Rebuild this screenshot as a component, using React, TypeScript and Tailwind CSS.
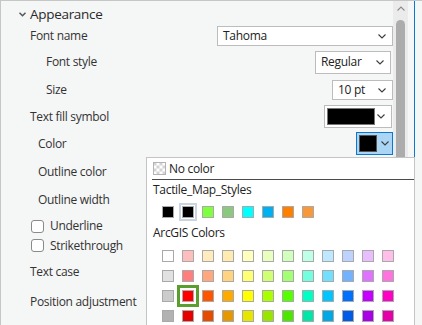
import React from 'react';

const tactile = ['#000000', '#000000', '#80ff40', '#8cc880', '#00ffff', '#00b0f0', '#ff8000', '#f7993b'];

const arcgis = [
  ['#ffffff', '#ffbebe', '#ffebbe', '#ffebaf', '#ffffbe', '#e9ffbe', '#d3ffbe', '#beffe8', '#bee8ff', '#bed2ff', '#e8beff', '#ffbee8'],
  ['#e1e1e1', '#ff7f7f', '#ffa77f', '#ffd37f', '#ffff73', '#d1ff73', '#a3ff73', '#73ffdf', '#73dfff', '#73b2ff', '#df73ff', '#ff73df'],
  ['#cccccc', '#ff0000', '#ff5500', '#ffaa00', '#ffff00', '#aaff00', '#55ff00', '#00ffc5', '#00c5ff', '#0070ff', '#c500ff', '#ff00c5'],
  ['#b2b2b2', '#e60000', '#e64c00', '#e69800', '#e6e600', '#98e600', '#4ce600', '#00e6a9', '#00a9e6', '#005ce6', '#a900e6', '#e600a9'],
];

const Chevron = () => (
  <svg width="8" height="5" viewBox="0 0 8 5" className="shrink-0">
    <polyline points="0.5,0.5 4,4 7.5,0.5" fill="none" stroke="#3c3c3c" strokeWidth="1.1" />
  </svg>
);

const Checker = () => (
  <svg width="13" height="13" viewBox="0 0 13 13" className="shrink-0">
    <rect x="0" y="0" width="13" height="13" fill="#ffffff" />
    {[0, 1, 2, 3].map(r =>
      [0, 1, 2, 3].map(c =>
        (r + c) % 2 === 0 ? (
          <rect key={`${r}-${c}`} x={0.5 + c * 3} y={0.5 + r * 3} width="3" height="3" fill="#d4d4d4" />
        ) : null
      )
    )}
    <rect x="0.5" y="0.5" width="12" height="12" fill="none" stroke="#b4b4b4" />
  </svg>
);

const Swatch = ({ color, className = '' }: { color: string; className?: string }) => (
  <div
    className={`w-[12px] h-[12px] border border-[#a9a9a9] shrink-0 ${className}`}
    style={{ backgroundColor: color }}
  />
);

const Checkbox = () => (
  <div className="w-[13px] h-[13px] rounded-[3px] border border-[#8a8a8a] bg-white shrink-0" />
);

export default function App() {
  return (
    <div className="w-[422px] h-[325px] overflow-hidden relative bg-[#f5f6f6] border-t border-l border-[#c6c6c6] text-[12px] tracking-[-0.3px] text-[#333333] font-['Open_Sans','Noto_Sans',sans-serif]">
      <div className="flex h-full">
        <div className="w-[392px] pt-[3px] flex flex-col">
          <div className="h-[20px] flex items-center pl-[18px] gap-[4px]">
            <svg width="7" height="5" viewBox="0 0 7 5" className="shrink-0">
              <polyline points="0.5,0.8 3.5,3.8 6.5,0.8" fill="none" stroke="#555" strokeWidth="1.5" />
            </svg>
            <span className="text-[13.5px] text-[#2a2a2a]">Appearance</span>
          </div>

          <div className="h-[24px] flex items-center justify-between pl-[29px]">
            <span>Font name</span>
            <div className="w-[176px] h-[20px] bg-white border border-[#bcbcbc] flex items-center justify-between pl-[5px] pr-[6px]">
              <span className="text-[#222]">Tahoma</span>
              <Chevron />
            </div>
          </div>

          <div className="h-[28px] flex items-center justify-between pl-[45px]">
            <span>Font style</span>
            <div className="w-[76px] h-[23px] mr-[2px] bg-white border border-[#bcbcbc] flex items-center justify-between pl-[5px] pr-[6px]">
              <span className="text-[#222]">Regular</span>
              <Chevron />
            </div>
          </div>

          <div className="h-[28px] flex items-center justify-between pl-[45px]">
            <span>Size</span>
            <div className="w-[61px] h-[20px] bg-white border border-[#bcbcbc] flex items-center justify-between pl-[5px] pr-[6px]">
              <span className="text-[#222]">10 pt</span>
              <Chevron />
            </div>
          </div>

          <div className="h-[25px] flex items-center justify-between pl-[29px]">
            <span>Text fill symbol</span>
            <div className="w-[68px] h-[23px] mr-[1px] bg-white border border-[#bcbcbc] flex items-center justify-between pl-[2px] pr-[6px]">
              <div className="w-[48px] h-[17px] bg-black border border-[#777]" />
              <Chevron />
            </div>
          </div>

          <div className="h-[29px] flex items-center justify-between pl-[37px]">
            <span>Color</span>
            <div className="w-[37px] h-[23px] bg-[#aad5f4] border border-[#0a78d2] flex items-center justify-between pl-[2px] pr-[3px]">
              <div className="w-[18px] h-[17px] bg-black border border-[#555]" />
              <Chevron />
            </div>
          </div>

          <div className="h-[28px] flex items-center pl-[37px]">
            <span>Outline color</span>
          </div>

          <div className="h-[28px] flex items-center pl-[37px]">
            <span>Outline width</span>
          </div>

          <div className="h-[24px] flex items-center pl-[30px] gap-[6px]">
            <Checkbox />
            <span>Underline</span>
          </div>

          <div className="h-[15px] flex items-center pl-[30px] gap-[6px]">
            <Checkbox />
            <span>Strikethrough</span>
          </div>

          <div className="h-[38px] flex items-center pl-[29px]">
            <span>Text case</span>
          </div>

          <div className="h-[22px] flex items-center pl-[29px]">
            <span>Position adjustment</span>
          </div>
        </div>

        <div className="w-[15px] bg-[#ebebeb] flex flex-col items-center">
          <svg width="8" height="5" viewBox="0 0 8 5" className="mt-[5px]">
            <polyline points="0.5,4.5 4,1 7.5,4.5" fill="none" stroke="#8a8a8a" strokeWidth="1.1" />
          </svg>
          <div className="w-[9px] flex-1 mt-[9px] rounded-t-full bg-[#acacac]" />
        </div>
        <div className="w-[6px]" />
        <div className="w-px bg-[#0a78d2]" />
        <div className="flex-1" />
      </div>

      <div className="absolute left-[145px] top-[156px] w-[269px] h-[180px] bg-white border border-[#c4c4c4] flex flex-col">
        <div className="h-[21px] flex items-center pl-[6px] gap-[3px]">
          <Checker />
          <span className="text-[#222]">No color</span>
        </div>
        <div className="h-px ml-[5px] bg-[#4a4a4a]" />
        <div className="h-[20px] flex items-center pl-[6px]">
          <span className="text-[#222]">Tactile_Map_Styles</span>
        </div>
        <div className="mt-[6px] flex pl-[15px] gap-[8px]">
          {tactile.map((c, i) => (
            <Swatch
              key={i}
              color={c}
              className={i === 1 ? 'outline-2 outline-solid outline-[#c8d6e3] outline-offset-[1px]' : ''}
            />
          ))}
        </div>
        <div className="mt-[6px] h-[18px] flex items-center pl-[6px]">
          <span className="text-[#222]">ArcGIS Colors</span>
        </div>
        <div className="mt-[8px] flex flex-col gap-[8px] pl-[15px]">
          {arcgis.map((row, r) => (
            <div key={r} className="flex gap-[8px]">
              {row.map((c, i) => (
                <Swatch
                  key={i}
                  color={c}
                  className={r === 2 && i === 1 ? 'outline-3 outline-solid outline-[#5a9e2e] outline-offset-[2px]' : ''}
                />
              ))}
            </div>
          ))}
        </div>
      </div>
    </div>
  );
}
